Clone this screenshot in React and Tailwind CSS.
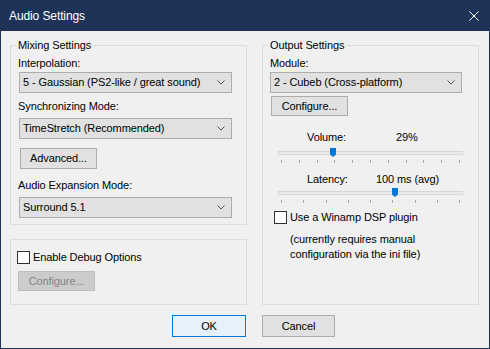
import React from "react";

function Chevron() {
  return (
    <svg width="8" height="5" viewBox="0 0 8 5" className="shrink-0">
      <path d="M0.5 0.5 L4 4 L7.5 0.5" fill="none" stroke="#555" strokeWidth="1" />
    </svg>
  );
}

function Select({ value, className }) {
  return (
    <div
      className={`flex h-[21px] items-center justify-between border border-[#adadad] bg-[#e1e1e1] pl-[3px] pr-[6px] ${className}`}
    >
      <span className="whitespace-nowrap">{value}</span>
      <Chevron />
    </div>
  );
}

function Button({ children, className, disabled, focused }) {
  let look = "border-[#adadad] bg-[#e1e1e1] text-black";
  if (disabled) look = "border-[#bfbfbf] bg-[#cccccc] text-[#838383]";
  if (focused) look = "border-[#0078d7] bg-[#e5f1fb] text-black";
  return (
    <div className={`flex items-center justify-center border ${look} ${className}`}>
      {children}
    </div>
  );
}

function Checkbox({ label, className }) {
  return (
    <div className={`flex h-[15px] items-center gap-[3px] ${className}`}>
      <div className="h-[13px] w-[13px] border border-[#333333] bg-white" />
      <span className="whitespace-nowrap">{label}</span>
    </div>
  );
}

function Group({ title, className, children }) {
  return (
    <div className={`relative border border-[#dcdcdc] ${className}`}>
      <span className="absolute -top-[8px] left-[5px] bg-[#f0f0f0] px-[2px] leading-[15px]">
        {title}
      </span>
      {children}
    </div>
  );
}

function Slider({ ticks, pos, className }) {
  return (
    <div className={`relative w-[185px] ${className}`}>
      <div className="h-[4px] border border-[#d6d6d6] bg-[#e7eaea]" />
      <div className="mt-[5px] flex justify-between px-[3px]">
        {Array.from({ length: ticks }).map((_, i) => (
          <div key={i} className="h-[3px] w-[1px] bg-[#a8a8a8]" />
        ))}
      </div>
      <svg
        width="6"
        height="9"
        viewBox="0 0 6 9"
        className="absolute -top-[3px]"
        style={{ left: pos }}
      >
        <path d="M0 0 H6 V6.5 L3 9 L0 6.5 Z" fill="#0078d7" />
      </svg>
    </div>
  );
}

export default function App() {
  return (
    <div className="flex h-[349px] w-[490px] flex-col bg-[#1f3358] p-[1px] font-['Liberation_Sans',Arial,sans-serif] text-[11px] leading-[15px] tracking-[-0.1px] text-black">
      {/* Title bar */}
      <div className="flex h-[30px] shrink-0 items-center justify-between pl-[8px] pr-[10px] text-[12px] text-white">
        <span>Audio Settings</span>
        <svg width="10" height="10" viewBox="0 0 10 10">
          <path d="M0.5 0.5 L9.5 9.5 M9.5 0.5 L0.5 9.5" stroke="#ffffff" strokeWidth="1" />
        </svg>
      </div>

      {/* Body */}
      <div className="flex flex-1 flex-col bg-[#f0f0f0] pl-[9px] pt-[14px]">
        <div className="flex gap-[15px]">
          {/* Left column */}
          <div className="flex w-[237px] flex-col gap-[14px]">
            <Group title="Mixing Settings" className="h-[180px] pl-[7px]">
              <div className="mt-[10px]">Interpolation:</div>
              <Select
                value="5 - Gaussian (PS2-like / great sound)"
                className="ml-[1px] mt-[1px] w-[213px]"
              />
              <div className="mt-[6px]">Synchronizing Mode:</div>
              <Select value="TimeStretch (Recommended)" className="ml-[1px] mt-[4px] w-[213px]" />
              <Button className="ml-[2px] mt-[9px] h-[21px] w-[77px]">Advanced...</Button>
              <div className="mt-[9px]">Audio Expansion Mode:</div>
              <Select value="Surround 5.1" className="ml-[1px] mt-[4px] w-[213px]" />
            </Group>

            <div className="h-[66px] border border-[#dcdcdc] pl-[6px]">
              <Checkbox label="Enable Debug Options" className="mt-[10px]" />
              <Button disabled className="ml-[1px] mt-[6px] h-[20px] w-[77px]">
                Configure...
              </Button>
            </div>
          </div>

          {/* Right column */}
          <Group title="Output Settings" className="h-[260px] w-[217px] pl-[7px]">
            <div className="mt-[10px]">Module:</div>
            <Select value="2 - Cubeb (Cross-platform)" className="mt-[1px] w-[192px]" />
            <Button className="ml-[1px] mt-[3px] h-[20px] w-[77px]">Configure...</Button>

            <div className="mt-[14px] flex pl-[37px]">
              <span className="w-[89px]">Volume:</span>
              <span>29%</span>
            </div>
            <Slider ticks={11} pos={52} className="ml-[8px] mt-[6px]" />

            <div className="mt-[9px] flex pl-[37px]">
              <span className="w-[69px]">Latency:</span>
              <span>100 ms (avg)</span>
            </div>
            <Slider ticks={9} pos={114} className="ml-[8px] mt-[4px]" />

            <Checkbox label="Use a Winamp DSP plugin" className="ml-[4px] mt-[7px]" />
            <div className="ml-[20px] mt-[7px]">
              <div>(currently requires manual</div>
              <div>configuration via the ini file)</div>
            </div>
          </Group>
        </div>

        {/* Dialog buttons */}
        <div className="mt-[10px] flex gap-[16px] pl-[162px]">
          <Button focused className="h-[22px] w-[74px]">OK</Button>
          <Button className="h-[22px] w-[73px]">Cancel</Button>
        </div>
      </div>
    </div>
  );
}
